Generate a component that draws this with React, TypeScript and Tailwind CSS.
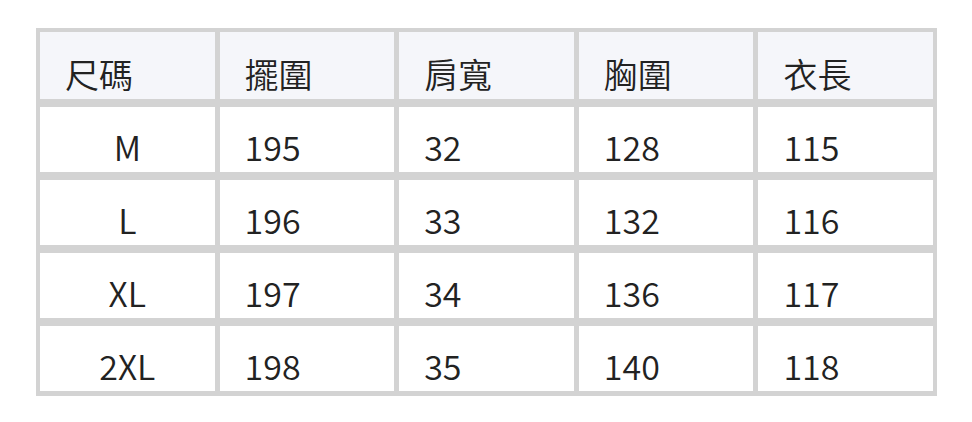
const headers = ["尺碼", "擺圍", "肩寬", "胸圍", "衣長"];

const rows = [
  ["M", "195", "32", "128", "115"],
  ["L", "196", "33", "132", "116"],
  ["XL", "197", "34", "136", "117"],
  ["2XL", "198", "35", "140", "118"],
];

export default function App() {
  return (
    <div
      className="w-[972px] h-[422px] bg-white pt-[28px] pl-[36px]"
      style={{ fontFamily: '"Noto Sans CJK TC", "Noto Sans", sans-serif' }}
    >
      <div className="w-[901px] bg-[#d3d3d3] pt-[4px] pb-[5px] px-[4px] grid grid-cols-5 gap-x-[5px] gap-y-[8px] text-[#222222] font-[350]">
        {headers.map((h) => (
          <div
            key={h}
            className="h-[67px] bg-[#f5f6fa] flex items-end pl-[25px] pb-[1px] text-[34px] leading-[48px]"
          >
            {h}
          </div>
        ))}
        {rows.map((row) =>
          row.map((cell, i) => (
            <div
              key={row[0] + i}
              className={
                "h-[65px] bg-white flex items-end pb-[1px] text-[34px] leading-[48px] " +
                (i === 0 ? "justify-center" : "pl-[25px]")
              }
            >
              {cell}
            </div>
          ))
        )}
      </div>
    </div>
  );
}
